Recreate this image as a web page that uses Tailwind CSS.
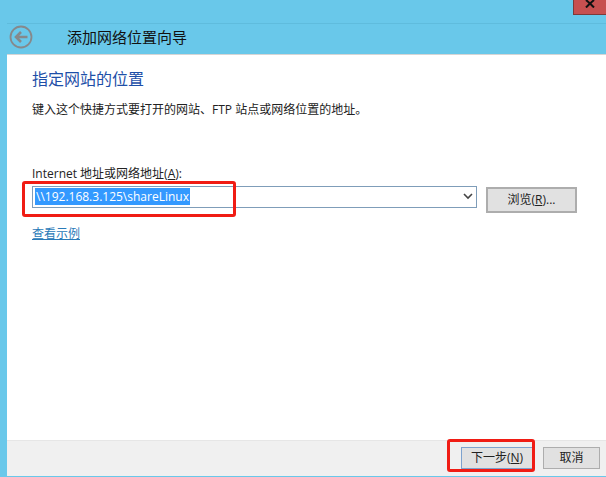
<!doctype html>
<html>
<head>
  <meta charset="UTF-8">
  <script src="https://cdn.jsdelivr.net/npm/@tailwindcss/browser@4"></script>
</head>
<body class="bg-[#69c8ea]">

<div class="relative w-[606px] h-[477px] overflow-hidden font-['Open_Sans','Noto_Sans_CJK_SC',sans-serif] text-[12px] text-[#222]">

  <!-- close button -->
  <div class="absolute right-0 top-0 w-[33px] h-[15px] bg-[#c75050] border-l border-b border-[#7d3a3a] flex justify-center items-start">
    <svg width="10" height="8" viewBox="0 0 10 8"><path d="M1 0 L5 3.5 L9 0 M1 7.5 L5 3.5 L9 7.5" fill="none" stroke="#111" stroke-width="2"/></svg>
  </div>

  <div class="flex flex-col h-full pt-[23px] pb-[1px] pl-[7px]">

    <!-- header -->
    <div class="h-[31px] shrink-0 flex items-center border-t border-[#5fbcdd]">
      <svg class="ml-[2px] -mt-[4px] shrink-0" width="24" height="24" viewBox="0 0 24 24">
        <circle cx="12" cy="12" r="10.5" fill="none" stroke="#86898c" stroke-width="1.8"/>
        <path d="M18.5 12 H7 M12 7 L7 12 L12 17" fill="none" stroke="#86898c" stroke-width="2.6"/>
      </svg>
      <span class="ml-[34px] text-[15px] leading-[20px] text-[#111] -mt-[5px]">添加网络位置向导</span>
    </div>

    <!-- body -->
    <div class="flex-1 bg-white border-t border-[#d5d5d5] pl-[25px] pt-[14px]">
      <h1 class="text-[16px] leading-[20px] text-[#1e4fa8]">指定网站的位置</h1>
      <p class="mt-[13px] leading-[16px]">键入这个快捷方式要打开的网站、FTP 站点或网络位置的地址。</p>

      <div class="mt-[48px] leading-[16px]">Internet 地址或网络地址(<span class="underline">A</span>):</div>

      <div class="mt-[4px] flex items-start">
        <div class="w-[445px] h-[22px] border border-[#7f9db9] flex items-center justify-between pl-[2px] pr-[3px] pb-[1px]">
          <span class="bg-[#3399ff] text-white text-[12px] leading-[17px] px-[1px]">\\192.168.3.125\shareLinux</span>
          <svg width="10" height="7" viewBox="0 0 10 7"><path d="M1 1 L5 5 L9 1" fill="none" stroke="#444" stroke-width="1.6"/></svg>
        </div>
        <button class="ml-[9px] mt-[1px] w-[91px] h-[26px] bg-[#e1e1e1] border-2 border-[#adadad] text-[12px] text-[#222]">浏览(<span class="underline">R</span>)...</button>
      </div>

      <a class="block mt-[13px] w-fit leading-[16px] text-[#2a7ab8] underline">查看示例</a>
    </div>

    <!-- footer -->
    <div class="h-[36px] shrink-0 bg-[#f0f0f0] border-t border-[#e6e6e6] flex items-start justify-end pt-[6px] pr-[6px]">
      <button class="w-[72px] h-[22px] bg-[#e1e1e1] border border-[#7da2ce] text-[12px]">下一步(<span class="underline">N</span>)</button>
      <button class="ml-[10px] w-[57px] h-[22px] bg-[#e1e1e1] border border-[#adadad] text-[12px]">取消</button>
    </div>
  </div>

  <!-- red annotation boxes -->
  <div class="absolute left-[22px] top-[181px] w-[214px] h-[36px] border-[3px] border-[#f01c14] rounded-[3px]"></div>
  <div class="absolute left-[447px] top-[439px] w-[88px] h-[33px] border-[3px] border-[#f01c14] rounded-[3px]"></div>
</div>

</body>
</html>
